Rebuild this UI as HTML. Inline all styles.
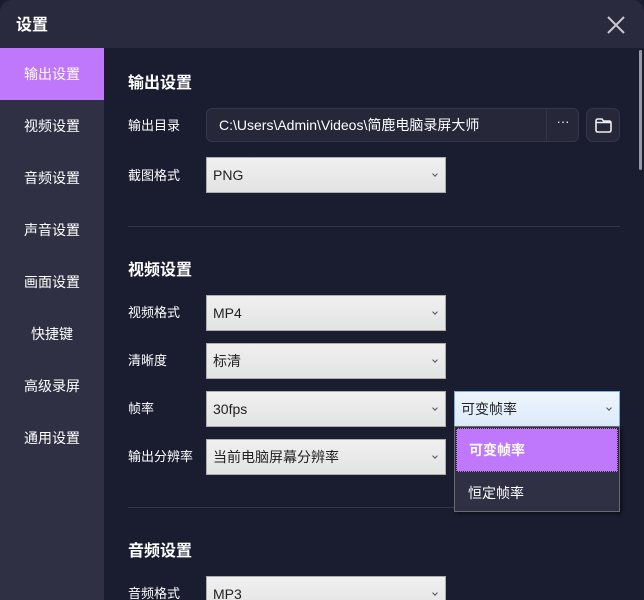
<!DOCTYPE html>
<html><head><meta charset="utf-8"><style>
*{margin:0;padding:0;box-sizing:border-box}
body{width:644px;height:600px;background:#1a1d30;font-family:"Liberation Sans","Noto Sans CJK SC",sans-serif;overflow:hidden;position:relative;color:#fff}
.win{position:absolute;left:0;top:0;width:644px;height:600px;border-radius:12px 12px 0 0;overflow:hidden;background:#1a1d30}
.title{position:absolute;left:0;top:0;width:644px;height:48px;background:#292a3e}
.title span{position:absolute;left:16px;top:11px;font-size:16px;font-weight:bold}
.side{position:absolute;left:0;top:48px;width:104px;height:552px;background:#2f3044}
.side div{height:52px;line-height:52px;text-align:center;font-size:14px}
.side .on{background:#bf78fc}
.abs{position:absolute}
.h{position:absolute;left:128px;font-size:16px;font-weight:bold}
.lab{position:absolute;left:128px;font-size:13px}
.sel{position:absolute;left:206px;width:240px;height:36px;background:linear-gradient(#f0f0f0,#e3e3e3);border:1px solid #adadad;color:#222;font-size:14px;line-height:34px;padding-left:6px}
.sel:after{content:"";position:absolute;right:8px;top:14px;width:3px;height:3px;border-right:1px solid #555;border-bottom:1px solid #555;transform:rotate(45deg)}
.hr{position:absolute;left:128px;width:492px;height:1px;background:#33364a}
</style></head><body><div class="win">
<div class="title"><span>设置</span>
<svg class="abs" style="left:606px;top:15px" width="20" height="20" viewBox="0 0 20 20"><path d="M2 2L18 18M18 2L2 18" stroke="#c8c8cc" stroke-width="2"/></svg></div>
<div class="side">
<div class="on">输出设置</div><div>视频设置</div><div>音频设置</div><div>声音设置</div><div>画面设置</div><div>快捷键</div><div>高级录屏</div><div>通用设置</div>
</div>
<div class="abs" style="left:639px;top:50px;width:3px;height:120px;background:#9a9aa6;border-radius:2px"></div>
<div class="h" style="top:69px">输出设置</div>
<div class="lab" style="top:115px">输出目录</div>
<div class="abs" style="left:206px;top:108px;width:373px;height:34px;background:#262839;border:1px solid #33364a;border-radius:6px;font-size:14px;line-height:32px;padding-left:12px">C:\Users\Admin\Videos\简鹿电脑录屏大师
<div class="abs" style="left:339px;top:0;width:1px;height:32px;background:#33364a"></div>
<div class="abs" style="left:344px;top:-3px;width:24px;text-align:center;font-size:13px">···</div></div>
<div class="abs" style="left:586px;top:108px;width:34px;height:34px;background:#262839;border:1px solid #33364a;border-radius:7px">
<svg class="abs" style="left:7px;top:8px" width="19" height="17" viewBox="0 0 19 17"><path d="M2 4Q2 2 4 2H8L9.5 4H15Q17 4 17 6V13Q17 15 15 15H4Q2 15 2 13ZM2 5.5H17" fill="none" stroke="#eee" stroke-width="1.6"/></svg></div>
<div class="lab" style="top:165px">截图格式</div>
<div class="sel" style="top:157px">PNG</div>
<div class="hr" style="top:226px"></div>
<div class="h" style="top:256px">视频设置</div>
<div class="lab" style="top:302px">视频格式</div><div class="sel" style="top:295px">MP4</div>
<div class="lab" style="top:350px">清晰度</div><div class="sel" style="top:343px">标清</div>
<div class="lab" style="top:398px">帧率</div><div class="sel" style="top:391px">30fps</div>
<div class="lab" style="top:446px">输出分辨率</div><div class="sel" style="top:439px">当前电脑屏幕分辨率</div>
<div class="sel" style="left:454px;top:391px;width:166px;background:linear-gradient(#eef5fd,#dcebfb);border-color:#7aaee0"></div>
<div class="abs" style="left:461px;top:399px;color:#222;font-size:14px">可变帧率</div>
<div class="hr" style="top:507px"></div>
<div class="abs" style="left:454px;top:426px;width:166px;height:86px;background:#2f3044;border:1px solid #6a6a72;box-shadow:2px 2px 3px rgba(0,0,0,.5)">
<div style="height:44px;background:#bf78fc;border:1px dotted #222;margin:1px;font-size:14px;font-weight:bold;line-height:42px;padding-left:12px">可变帧率</div>
<div style="height:40px;line-height:40px;font-size:14px;padding-left:13px">恒定帧率</div></div>
<div class="h" style="top:537px">音频设置</div>
<div class="lab" style="top:583px">音频格式</div><div class="sel" style="top:576px">MP3</div>
</div></body></html>
